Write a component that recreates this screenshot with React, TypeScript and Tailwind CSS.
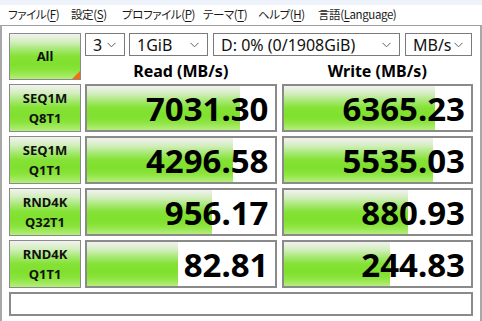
import React from "react";

const rows = [
  { l1: "SEQ1M", l2: "Q8T1", read: "7031.30", rw: 153, write: "6365.23", ww: 151 },
  { l1: "SEQ1M", l2: "Q1T1", read: "4296.58", rw: 146, write: "5535.03", ww: 149 },
  { l1: "RND4K", l2: "Q32T1", read: "956.17", rw: 125, write: "880.93", ww: 124 },
  { l1: "RND4K", l2: "Q1T1", read: "82.81", rw: 91, write: "244.83", ww: 106 },
];

// widths include the gap to the next item
const menus = [
  { t: "ファイル(", k: "F", e: ")", w: "w-[63px]" },
  { t: "設定(", k: "S", e: ")", w: "w-[51px]" },
  { t: "プロファイル(", k: "P", e: ")", w: "w-[81px]" },
  { t: "テーマ(", k: "T", e: ")", w: "w-[55px]" },
  { t: "ヘルプ(", k: "H", e: ")", w: "w-[60px]" },
  { t: "言語(", k: "L", e: "anguage)", w: "w-[90px]" },
];

const green =
  "bg-[linear-gradient(to_bottom,#f2f2f0_0%,#d2eebc_18%,#a4e870_35%,#84e234_50%,#80e02e_68%,#8ce43e_82%,#b4ee7c_100%)]";

const Select = ({ text, w }: { text: string; w: string }) => (
  <div className={`${w} h-[23px] flex items-center justify-between border border-[#7a7a7a] bg-white pl-[7px] pr-[8px]`}>
    <span className="text-[16px] leading-none text-[#111]">{text}</span>
    <svg width="9" height="6" viewBox="0 0 9 6">
      <polyline points="0.5,0.8 4.5,4.8 8.5,0.8" fill="none" stroke="#606060" strokeWidth="1" />
    </svg>
  </div>
);

const Cell = ({ value, bar }: { value: string; bar: number }) => (
  <div className="relative flex-1 h-[48px] border-2 border-[#8a8a8a] bg-white overflow-hidden">
    <div className={`absolute left-0 top-0 bottom-0 ${green}`} style={{ width: bar }} />
    <div className="relative h-full flex items-center justify-end pr-[6px]">
      <span className="text-[33px] font-bold leading-none text-black">{value}</span>
    </div>
  </div>
);

export default function App() {
  return (
    <div className="w-[482px] h-[321px] bg-white overflow-hidden font-['Noto_Sans','Noto_Sans_CJK_JP',sans-serif]">
      <div className="h-[5px] bg-[#eef2fa]" />
      <div className="h-[20px] flex items-center pl-[8px] text-[11.5px] text-[#1a1a1a] font-['Noto_Sans_CJK_JP',sans-serif] [font-feature-settings:'palt']">
        {menus.map((m) => (
          <span key={m.k} className={`${m.w} shrink-0 whitespace-nowrap leading-none tracking-[-0.4px]`}>
            {m.t}
            <span className="underline underline-offset-2">{m.k}</span>
            {m.e}
          </span>
        ))}
      </div>
      <div className="h-[296px] border-t border-[#a0a0a0] border-x-2 border-x-[#a8a8a8] bg-white pt-[7px] pl-[7px] pr-[7px]">
        <div className="flex gap-[4px] h-[47px]">
          <div className={`relative w-[72px] h-[47px] border border-[#8a8a8a] ${green} flex items-center justify-center`}>
            <span className="text-[13px] font-bold text-[#111]">All</span>
            <div className="absolute right-0 bottom-0 w-0 h-0 border-l-[8px] border-l-transparent border-b-[8px] border-b-[#f07010]" />
          </div>
          <div className="flex-1 flex flex-col">
            <div className="flex">
              <Select text="3" w="w-[40px]" />
              <div className="w-[4px]" />
              <Select text="1GiB" w="w-[79px]" />
              <div className="w-[5px]" />
              <Select text="D: 0% (0/1908GiB)" w="w-[187px]" />
              <div className="w-[5px]" />
              <Select text="MB/s" w="w-[67px]" />
            </div>
            <div className="flex-1 flex items-center pt-[5px] gap-[5px]">
              <div className="flex-1 text-center text-[16px] leading-[20px] font-bold text-black">Read (MB/s)</div>
              <div className="flex-1 text-center text-[16px] leading-[20px] font-bold text-black">Write (MB/s)</div>
            </div>
          </div>
        </div>
        <div className="flex flex-col gap-[4px] mt-[4px]">
          {rows.map((r, i) => (
            <div key={i} className="flex gap-[4px]">
              <div className={`w-[72px] h-[48px] border border-[#8a8a8a] ${green} flex flex-col items-center justify-center`}>
                <span className="text-[13px] font-bold leading-[20px] text-[#111]">{r.l1}</span>
                <span className="text-[13px] font-bold leading-[20px] text-[#111]">{r.l2}</span>
              </div>
              <div className="flex-1 flex gap-[5px]">
                <Cell value={r.read} bar={r.rw} />
                <Cell value={r.write} bar={r.ww} />
              </div>
            </div>
          ))}
        </div>
        <div className="mt-[4px] h-[24px] border-2 border-[#8a8a8a] bg-white" />
      </div>
    </div>
  );
}
